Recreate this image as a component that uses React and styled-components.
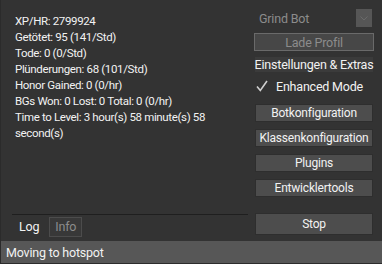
import React from 'react'
import styled, { createGlobalStyle } from 'styled-components'

const Colors = {
    bg: '#333333',
    text: '#f2f2f2',
    dim: '#8c8c8c',
    button: '#4d4d4d',
    status: '#575757',
}

const GlobalStyle = createGlobalStyle`
    html, body {
        margin: 0;
        padding: 0;
        background: ${Colors.bg};
    }
`

const Window = styled.div`
    width: 382px;
    height: 264px;
    display: flex;
    flex-direction: column;
    background: ${Colors.bg};
    color: ${Colors.text};
    font-family: Roboto, "Open Sans", sans-serif;
    letter-spacing: -0.2px;
    overflow: hidden;
    border-left: 1px solid #2b2b2b;
    box-sizing: border-box;
`

const Main = styled.div`
    flex: 1;
    display: flex;
    min-height: 0;
`

const LeftPane = styled.div`
    flex: 0 0 236px;
    padding-left: 11px;
    display: flex;
    flex-direction: column;
`

const Stats = styled.div`
    flex: 1;
    padding: 13px 0 0 3px;
    border-bottom: 1px solid #1f1f1f;
    font-size: 11.5px;
    letter-spacing: -0.35px;
    line-height: 16px;
    white-space: nowrap;
`

const TabStrip = styled.div`
    height: 26px;
    display: flex;
    align-items: center;
    padding-left: 6px;
    gap: 9px;
    font-size: 12.5px;
`

const Tab = styled.div`
    height: 18px;
    display: flex;
    align-items: center;
    padding: 0 ${p => (p.$active ? 0 : 5)}px;
    color: ${p => (p.$active ? Colors.text : Colors.dim)};
    background: ${p => (p.$active ? 'transparent' : '#383838')};
    border: 1px solid ${p => (p.$active ? 'transparent' : '#4c4c4c')};
    margin-top: -3px;
`

const RightPane = styled.div`
    flex: 1;
    min-width: 0;
    display: flex;
    flex-direction: column;
    padding: 9px 9px 6px 7px;
    font-size: 12px;
`

const Combo = styled.div`
    height: 18px;
    display: flex;
    align-items: center;
    justify-content: space-between;
    padding-left: 4px;
    color: ${Colors.dim};
    font-size: 12.5px;
`

const ComboArrow = styled.div`
    width: 16px;
    height: 18px;
    background: #565656;
    display: grid;
    place-items: center;
    margin-right: 1px;
`

const Button = styled.div`
    height: ${p => p.$h || 18}px;
    margin-top: ${p => p.$mt || 0}px;
    display: flex;
    align-items: center;
    justify-content: center;
    background: ${Colors.button};
    border: 1px solid #2e2e2e;
    box-sizing: border-box;
    white-space: nowrap;
`

const DisabledButton = styled(Button)`
    margin-left: -1px;
    margin-right: -1px;
    background: #474747;
    border-color: #6a6a6a;
    color: ${Colors.dim};
    font-size: 12.5px;
`

const FlatButton = styled(Button)`
    background: #3b3b3b;
    border: none;
    font-size: 12.5px;
`

const CheckRow = styled.label`
    height: 16px;
    margin-top: 6px;
    display: flex;
    align-items: center;
    gap: 8px;
    padding-left: 1px;
    font-size: 12.5px;
`

const StatusBar = styled.div`
    height: 23px;
    background: ${Colors.status};
    border-bottom: 1px solid #2c2c2c;
    box-sizing: border-box;
    display: flex;
    align-items: center;
    padding-left: 5px;
    font-size: 12.5px;
`

const stats = [
    'XP/HR: 2799924',
    'Getötet: 95 (141/Std)',
    'Tode: 0 (0/Std)',
    'Plünderungen: 68 (101/Std)',
    'Honor Gained: 0 (0/hr)',
    'BGs Won: 0 Lost: 0 Total: 0 (0/hr)',
    'Time to Level: 3 hour(s) 58 minute(s) 58',
    'second(s)',
]

export default function App() {
    return (
        <>
            <GlobalStyle />
            <Window>
                <Main>
                    <LeftPane>
                        <Stats>
                            {stats.map(line => (
                                <div key={line}>{line}</div>
                            ))}
                        </Stats>
                        <TabStrip>
                            <Tab $active>Log</Tab>
                            <Tab>Info</Tab>
                        </TabStrip>
                    </LeftPane>
                    <RightPane>
                        <Combo>
                            Grind Bot
                            <ComboArrow>
                                <svg width="8" height="5" viewBox="0 0 8 5">
                                    <path d="M0.5 0.5 L4 4 L7.5 0.5" fill="none" stroke="#6a6a6a" strokeWidth="1" />
                                </svg>
                            </ComboArrow>
                        </Combo>
                        <DisabledButton $mt={6}>Lade Profil</DisabledButton>
                        <FlatButton $mt={6} $h={15}>Einstellungen &amp; Extras</FlatButton>
                        <CheckRow>
                            <svg width="12" height="12" viewBox="0 0 12 12">
                                <path d="M1 6.5 L4.3 10.5 L11 1" fill="none" stroke="#d0d0d0" strokeWidth="1.6" />
                            </svg>
                            Enhanced Mode
                        </CheckRow>
                        <Button $mt={10}>Botkonfiguration</Button>
                        <Button $mt={7}>Klassenkonfiguration</Button>
                        <Button $mt={7}>Plugins</Button>
                        <Button $mt={7}>Entwicklertools</Button>
                        <Button $mt={16} $h={22}>Stop</Button>
                    </RightPane>
                </Main>
                <StatusBar>Moving to hotspot</StatusBar>
            </Window>
        </>
    )
}
